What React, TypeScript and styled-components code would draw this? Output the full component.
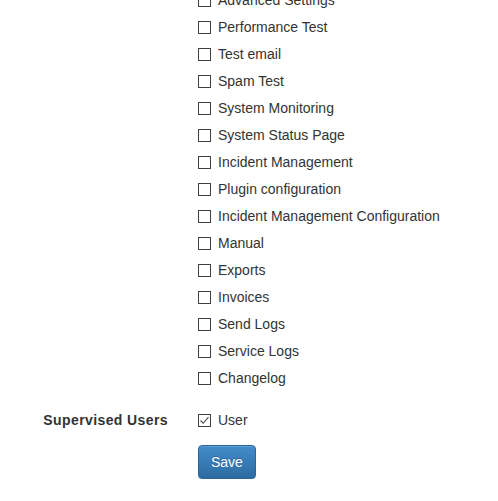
import React from "react";
import styled, { createGlobalStyle } from "styled-components";

const GlobalStyle = createGlobalStyle`
  html, body {
    margin: 0;
    padding: 0;
    background: #fff;
    overflow: hidden;
  }
  body {
    font-family: "Liberation Sans", Arial, Helvetica, sans-serif;
    font-size: 14px;
    line-height: 20px;
    color: #333;
  }
`;

const Form = styled.form`
  margin-top: -17px;
  width: 498px;
`;

const FormGroup = styled.div`
  display: flex;
  margin-bottom: 15px;
`;

const LabelCol = styled.div`
  width: 183px;
  box-sizing: border-box;
  padding-right: 15px;
  padding-top: 7px;
  text-align: right;
  font-weight: bold;
  letter-spacing: 0.4px;
`;

const FieldCol = styled.div`
  flex: 1;
  padding-left: 15px;
  display: flex;
  flex-direction: column;
`;

const CheckRow = styled.label`
  display: block;
  position: relative;
  min-height: 20px;
  padding-top: 7px;
  padding-left: 20px;
  cursor: pointer;
`;

const Box = styled.input`
  appearance: none;
  position: absolute;
  left: 0;
  top: 11px;
  width: 13px;
  height: 13px;
  margin: 0;
  box-sizing: border-box;
  border: 1px solid #3f3f3f;
  background: #fff;
  border-radius: 0;

  &:checked {
    background-image: url("data:image/svg+xml;utf8,<svg xmlns='http://www.w3.org/2000/svg' width='11' height='11' viewBox='0 0 11 11'><path d='M1.5 5.5 L4.2 8.2 L9.5 2.2' fill='none' stroke='%23555' stroke-width='1.2'/></svg>");
    background-repeat: no-repeat;
    background-position: center;
  }
`;

const SaveButton = styled.button`
  font-family: inherit;
  font-size: 14px;
  line-height: 20px;
  padding: 6px 12px;
  color: #fff;
  border: 1px solid #2b669a;
  border-radius: 4px;
  background-image: linear-gradient(to bottom, #428bca 0, #2d6ca2 100%);
  box-shadow: inset 0 1px 0 rgba(255, 255, 255, 0.15), 0 1px 1px rgba(0, 0, 0, 0.075);
  text-shadow: 0 -1px 0 rgba(0, 0, 0, 0.2);
  cursor: pointer;
`;

const ButtonRow = styled.div`
  padding-left: 198px;
`;

const permissions = [
  "Advanced Settings",
  "Performance Test",
  "Test email",
  "Spam Test",
  "System Monitoring",
  "System Status Page",
  "Incident Management",
  "Plugin configuration",
  "Incident Management Configuration",
  "Manual",
  "Exports",
  "Invoices",
  "Send Logs",
  "Service Logs",
  "Changelog",
];

const Check = ({ label, checked }: { label: string; checked?: boolean }) => (
  <CheckRow>
    <Box type="checkbox" defaultChecked={checked} />
    {label}
  </CheckRow>
);

const App = () => {
  return (
    <>
      <GlobalStyle />
      <Form onSubmit={(e) => e.preventDefault()}>
        <FormGroup>
          <LabelCol />
          <FieldCol>
            {permissions.map((p) => (
              <Check key={p} label={p} />
            ))}
          </FieldCol>
        </FormGroup>
        <FormGroup>
          <LabelCol>Supervised Users</LabelCol>
          <FieldCol>
            <Check label="User" checked />
          </FieldCol>
        </FormGroup>
        <ButtonRow>
          <SaveButton type="submit">Save</SaveButton>
        </ButtonRow>
      </Form>
    </>
  );
};

export default App;
